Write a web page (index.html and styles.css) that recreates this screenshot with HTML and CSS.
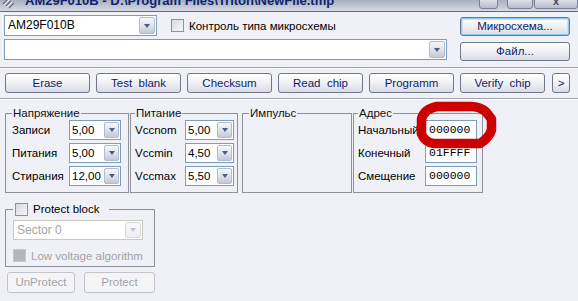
FILE: index.html
```html
<!DOCTYPE html>
<html lang="ru">
<head>
<meta charset="utf-8">
<title>AM29F010B</title>
<link rel="stylesheet" href="styles.css">
</head>
<body>
<div class="titlebar">
  <svg class="appicon" viewBox="0 0 16 11" aria-hidden="true">
    <path d="M1 4 L6 -1 M4 6 L9 1 M7 8 L12 3" stroke="#6c7080" stroke-width="1.3" fill="none"/>
    <path d="M2 5 L7 0 M5 7 L10 2" stroke="#ffffff" stroke-width="1" fill="none"/>
  </svg>
  <span class="title">AM29F010B - D:\Program Files\Triton\NewFile.tmp</span>
  <div class="wbtns">
    <span class="wb wb-min"></span>
    <span class="wb wb-max"></span>
    <span class="wb wb-close">x</span>
  </div>
</div>

<div class="top">
  <div class="top-left">
    <div class="row1">
      <div class="combo combo-chip"><span class="combo-text">AM29F010B</span><span class="drop"><i></i></span></div>
      <label class="check"><span class="cb"></span><span>Контроль типа микросхемы</span></label>
    </div>
    <div class="combo combo-file"><span class="combo-text"></span><span class="drop"><i></i></span></div>
  </div>
  <div class="top-right">
    <button class="btn btn-default">Микросхема...</button>
    <button class="btn">Файл...</button>
  </div>
</div>

<div class="sep sep-1"></div>

<div class="actions">
  <button class="btn abtn">Erase</button>
  <button class="btn abtn">Test&nbsp; blank</button>
  <button class="btn abtn">Checksum</button>
  <button class="btn abtn">Read&nbsp; chip</button>
  <button class="btn abtn">Programm</button>
  <button class="btn abtn">Verify&nbsp; chip</button>
  <button class="btn abtn-more">&gt;</button>
</div>

<div class="sep sep-2"></div>

<div class="groups">
  <fieldset class="grp grp-volt">
    <legend>Напряжение</legend>
    <div class="frow"><span class="lbl">Записи</span><div class="combo combo-s"><span class="combo-text">5,00</span><span class="drop"><i></i></span></div></div>
    <div class="frow"><span class="lbl">Питания</span><div class="combo combo-s"><span class="combo-text">5,00</span><span class="drop"><i></i></span></div></div>
    <div class="frow"><span class="lbl">Стирания</span><div class="combo combo-s"><span class="combo-text">12,00</span><span class="drop"><i></i></span></div></div>
  </fieldset>
  <fieldset class="grp grp-pit">
    <legend>Питание</legend>
    <div class="frow"><span class="lbl">Vccnom</span><div class="combo combo-p"><span class="combo-text">5,00</span><span class="drop"><i></i></span></div></div>
    <div class="frow"><span class="lbl">Vccmin</span><div class="combo combo-p"><span class="combo-text">4,50</span><span class="drop"><i></i></span></div></div>
    <div class="frow"><span class="lbl">Vccmax</span><div class="combo combo-p"><span class="combo-text">5,50</span><span class="drop"><i></i></span></div></div>
  </fieldset>
  <fieldset class="grp grp-imp">
    <legend>Импульс</legend>
  </fieldset>
  <fieldset class="grp grp-adr">
    <legend>Адрес</legend>
    <div class="frow"><span class="lbl">Начальный</span><div class="edit">000000</div></div>
    <div class="frow"><span class="lbl">Конечный</span><div class="edit">01FFFF</div></div>
    <div class="frow"><span class="lbl">Смещение</span><div class="edit">000000</div></div>
  </fieldset>
</div>

<fieldset class="grp grp-protect">
  <legend><span class="cb"></span><span>Protect block</span></legend>
  <div class="combo combo-sector disabled"><span class="combo-text">Sector 0</span><span class="drop"><i></i></span></div>
  <label class="check check-dis"><span class="cb cb-dis"></span><span>Low voltage algorithm</span></label>
</fieldset>

<div class="pbtns">
  <button class="btn btn-dis pb-un">UnProtect</button>
  <button class="btn btn-dis pb-pr">Protect</button>
</div>

<svg class="ring" viewBox="0 0 578 301" aria-hidden="true">
  <path d="M437 106.5 L471 106.5 Q480 106.5 486 112 L491.5 119 L491.5 130 Q489 138 480 143.5 L434 143.5 Q425 142.5 421.5 134 L421.5 119 Q424 109 437 106.5 Z"
        fill="none" stroke="#cc0000" stroke-width="9.5" stroke-linejoin="round"/>
</svg>
</body>
</html>
```

FILE: styles.css
```css
* { box-sizing: border-box; }

html, body { margin: 0; padding: 0; }

body {
  width: 578px;
  height: 301px;
  overflow: hidden;
  position: relative;
  background: #f0f1f7;
  font-family: "Liberation Sans", Arial, sans-serif;
  font-size: 11px;
  color: #000;
}

/* ---------- title bar ---------- */
.titlebar {
  height: 12px;
  display: flex;
  align-items: flex-start;
  overflow: hidden;
  background: linear-gradient(#a9aec0, #d6d9e3);
  border-bottom: 1px solid #676c7c;
}
.appicon { flex: none; width: 16px; height: 11px; margin-left: 2px; }
.title {
  margin-left: 7px;
  margin-top: -7px;
  line-height: 16px;
  font-size: 13px;
  font-weight: bold;
  color: #0d2470;
  white-space: nowrap;
}
.wbtns { margin-left: auto; display: flex; align-items: flex-start; height: 11px; }
.wb {
  display: block;
  height: 12px;
  margin-top: -3px;
  border: 1px solid #7c8194;
  border-radius: 0 0 3px 3px;
  background: linear-gradient(#e6e8ee, #b9bdca);
}
.wb-min { width: 19px; }
.wb-max { width: 26px; margin-left: 9px; }
.wb-close {
  width: 44px;
  margin-left: 1px;
  text-align: center;
  font-weight: bold;
  font-size: 11px;
  line-height: 6px;
  color: #404658;
}

/* ---------- top controls ---------- */
.top {
  display: grid;
  grid-template-columns: 443px 110px;
  column-gap: 13px;
  padding: 3px 0 0 4px;
}
.top-left { display: flex; flex-direction: column; gap: 3px; }
.row1 { display: flex; align-items: center; }
.top-right { display: flex; flex-direction: column; gap: 6px; padding-top: 2px; }

.combo {
  display: flex;
  align-items: stretch;
  height: 21px;
  background: #fff;
  border: 1px solid #7f9db9;
}
.combo-text {
  flex: 1;
  min-width: 0;
  padding-left: 3px;
  line-height: 19px;
  white-space: nowrap;
  overflow: hidden;
  font-size: 12px;
}
.drop {
  flex: none;
  width: 16px;
  margin: 1px;
  border: 1px solid #b3bccd;
  border-radius: 2px;
  background: linear-gradient(#f6f7fa, #dde1ea 55%, #c3c8d6);
  display: flex;
  align-items: center;
  justify-content: center;
}
.drop i {
  display: block;
  width: 0;
  height: 0;
  border-left: 3.5px solid transparent;
  border-right: 3.5px solid transparent;
  border-top: 4px solid #4a5e86;
}
.combo-chip { width: 153px; }
.combo-file { width: 443px; }

.check { display: flex; align-items: center; white-space: nowrap; font-size: 11.5px; }
.row1 .check { margin-left: 14px; }
.cb {
  flex: none;
  width: 13px;
  height: 13px;
  border: 1px solid #8594ab;
  background: linear-gradient(135deg, #d6d9e2, #f7f7fa);
  margin-right: 5px;
}

/* ---------- buttons ---------- */
.btn {
  font-family: inherit;
  font-size: 11.5px;
  color: #0b1d6c;
  height: 19px;
  padding: 0;
  line-height: 17px;
  border: 1px solid #6e778c;
  border-radius: 3px;
  background: linear-gradient(#ffffff, #f1f1f5 50%, #d9dae3);
  white-space: nowrap;
}
.top-right .btn { height: 19px; }
.btn-default { box-shadow: inset 0 0 0 1px #8fcaf5, inset 0 0 0 2px #c7e4fb; }

.sep {
  height: 2px;
  border-top: 1px solid #a3a4ad;
  border-bottom: 1px solid #ffffff;
}
.sep-1 { margin-top: 6px; }
.sep-2 { margin-top: 5px; }

.actions {
  display: flex;
  gap: 6px;
  padding-left: 5px;
  margin-top: 4px;
}
.abtn { width: 85px; height: 20px; line-height: 18px; }
.abtn-more { width: 18px; height: 20px; line-height: 18px; margin-left: 1px; }

/* ---------- group boxes ---------- */
.groups {
  display: flex;
  margin-top: 6px;
  padding-left: 5px;
}
.grp {
  margin: 0;
  min-width: 0;
  border: 1px solid #8f9099;
  padding: 0 7px 6px 6px;
}
.grp legend {
  padding: 0 1px;
  line-height: 14px;
  font-size: 11.5px;
  color: #111;
}
.grp-volt { width: 124px; }
.grp-pit { width: 108px; margin-left: 1px; padding: 0 3px 6px 4px; }
.grp-imp { width: 110px; margin-left: 4px; }
.grp-adr { width: 130px; margin-left: 1px; padding: 0 5px 6px 4px; }

.frow { display: flex; align-items: center; height: 20px; font-size: 11.5px; }
.frow + .frow { margin-top: 3px; }
.lbl { flex: 1; white-space: nowrap; }
.combo-s { width: 52px; height: 20px; }
.combo-p { width: 49px; height: 20px; }
.combo-s .combo-text, .combo-p .combo-text { line-height: 18px; padding-left: 2px; font-size: 11.5px; }
.combo-s .drop, .combo-p .drop { width: 15px; }

.edit {
  width: 52px;
  height: 20px;
  background: #fff;
  border: 1px solid #7f9db9;
  padding-left: 3px;
  font-family: "Liberation Mono", "Courier New", monospace;
  font-size: 11.5px;
  line-height: 18px;
}

/* ---------- protect block ---------- */
.grp-protect {
  width: 150px;
  margin: 9px 0 0 5px;
  padding: 4px 11px 4px 7px;
}
.grp-protect legend {
  display: flex;
  align-items: center;
  white-space: nowrap;
  padding: 0 10px 0 2px;
  color: #000;
}
.combo-sector { width: 130px; height: 20px; }
.disabled { border-color: #c9c9bd; }
.disabled .combo-text { color: #a7a7a7; line-height: 18px; }
.disabled .drop { background: linear-gradient(#fafafb, #eceef2); border-color: #d7d9e0; }
.disabled .drop i { border-top-color: #c3c6cf; }

.check-dis { margin-top: 9px; height: 13px; color: #a3a3a3; }
.cb-dis { background: #b5b6bd; border-color: #c6c7cc; margin-right: 5px; }

.pbtns { display: flex; margin: 5px 0 0 7px; }
.btn-dis {
  height: 21px;
  color: #a3a4ab;
  border-color: #c3c4cb;
  background: #f5f5f8;
}
.pb-un { width: 68px; }
.pb-pr { width: 71px; margin-left: 9px; }

/* ---------- hand-drawn highlight ---------- */
.ring {
  position: absolute;
  left: 0;
  top: 0;
  width: 578px;
  height: 301px;
  pointer-events: none;
}
```
